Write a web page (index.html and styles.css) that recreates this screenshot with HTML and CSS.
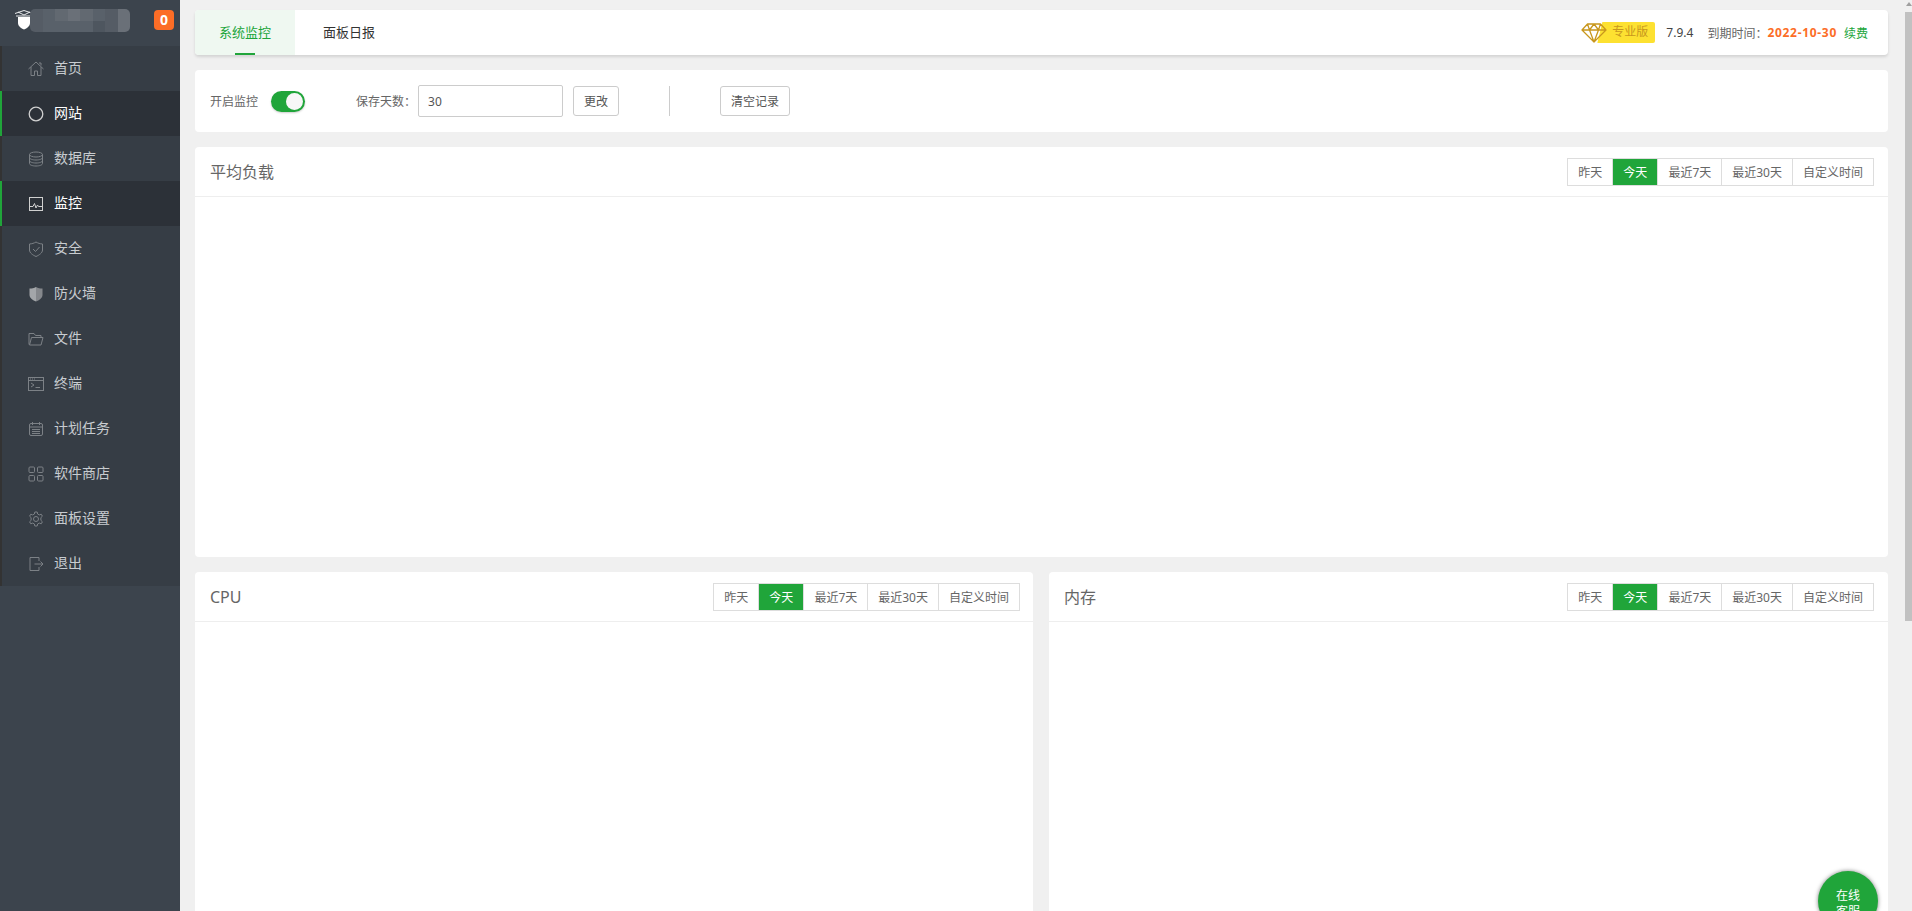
FILE: index.html
```html
<!DOCTYPE html>
<html lang="en">

<head>
    <meta charset="UTF-8">
    <title>系统监控</title>
    <link rel="stylesheet" href="styles.css">
</head>

<body>
    <div class="layout">
        <!-- Sidebar -->
        <aside class="sidebar">
            <div class="logo-bar">
                <svg class="logo-icon" viewBox="0 0 18 20" width="18" height="20">
                    <path d="M0 3.5 9 0.5 18 3.5 M3 2 9 5 15 2 M1 6 H17" fill="none" stroke="#e8eaec" stroke-width="1"/>
                    <path d="M3 7 H15 V13 C15 16 12 18.5 9 19.5 C6 18.5 3 16 3 13 Z" fill="#fff"/>
                </svg>
                <div class="mosaic">
                    <i class="m2"></i><i class="m3"></i><i class="m4"></i><i class="m5"></i><i class="m4"></i><i class="m3"></i><i class="m2"></i><i class="m5"></i>
                    <i class="m2"></i><i class="m3"></i><i class="m3"></i><i class="m3"></i><i class="m3"></i><i class="m1"></i><i class="m2"></i><i class="m5"></i>
                </div>
                <span class="badge">0</span>
            </div>
            <ul class="menu">
                <li class="menu-item">
                    <svg viewBox="0 0 16 16"><path d="M0.5 8 8 1 15.5 8 M3 6 V14.5 H6.5 V10 H9.5 V14.5 H13 V6 M11 2 H13 V4.5"/></svg>
                    <span>首页</span>
                </li>
                <li class="menu-item active">
                    <svg viewBox="0 0 16 16"><circle cx="8" cy="8" r="6.8" stroke-width="1.3"/></svg>
                    <span>网站</span>
                </li>
                <li class="menu-item">
                    <svg viewBox="0 0 16 16"><ellipse cx="8" cy="3.5" rx="6.5" ry="2.5"/><path d="M1.5 3.5 V12.5 C1.5 14 4.5 15 8 15 S14.5 14 14.5 12.5 V3.5 M1.5 6.5 C1.5 8 4.5 9 8 9 S14.5 8 14.5 6.5 M1.5 9.5 C1.5 11 4.5 12 8 12 S14.5 11 14.5 9.5"/></svg>
                    <span>数据库</span>
                </li>
                <li class="menu-item active">
                    <svg viewBox="0 0 16 16"><rect x="1.5" y="1.5" width="13" height="13"/><path d="M2 10.5 H5 L6.5 7.5 8 12 9.5 9 10.5 10.5 H14"/></svg>
                    <span>监控</span>
                </li>
                <li class="menu-item">
                    <svg viewBox="0 0 16 16"><path d="M8 1 C10 2.2 12 2.8 14.5 3 V9 C14.5 12 11 14.2 8 15.5 C5 14.2 1.5 12 1.5 9 V3 C4 2.8 6 2.2 8 1 Z M5 8 7.5 10.5 11.5 6"/></svg>
                    <span>安全</span>
                </li>
                <li class="menu-item">
                    <svg viewBox="0 0 16 16"><path class="fill-light" d="M8 1 C6 2.2 4 2.6 1.5 2.6 V9 C1.5 12 5 14.5 8 15.5 Z"/><path class="fill-dim" d="M8 1 C10 2.2 12 2.6 14.5 2.6 V9 C14.5 12 11 14.5 8 15.5 Z"/></svg>
                    <span>防火墙</span>
                </li>
                <li class="menu-item">
                    <svg viewBox="0 0 16 16"><path d="M1 13.5 V2.5 H6 L7.5 4.5 H13 V6.5 M1.5 14 H13 L15 6.5 H3.5 Z"/></svg>
                    <span>文件</span>
                </li>
                <li class="menu-item">
                    <svg viewBox="0 0 16 16"><rect x="0.5" y="1.5" width="15" height="13"/><path d="M0.5 4.5 H15.5 M2 3 H3 M4 3 H5 M6 3 H7 M3 7 6 9 3 11 M7.5 11.5 H12"/></svg>
                    <span>终端</span>
                </li>
                <li class="menu-item">
                    <svg viewBox="0 0 16 16"><rect x="1.5" y="2.5" width="13" height="12" rx="1.5"/><path d="M1.5 6 H14.5 M4.5 1 V4 M11.5 1 V4 M4 8.5 H12 M4 10.5 H12 M4 12.5 H12"/></svg>
                    <span>计划任务</span>
                </li>
                <li class="menu-item">
                    <svg viewBox="0 0 16 16"><rect x="1" y="1" width="5.5" height="5.5" rx="1"/><rect x="9.5" y="1" width="5.5" height="5.5" rx="1"/><rect x="1" y="9.5" width="5.5" height="5.5" rx="1"/><rect x="9.5" y="9.5" width="5.5" height="5.5" rx="1"/></svg>
                    <span>软件商店</span>
                </li>
                <li class="menu-item">
                    <svg viewBox="0 0 16 16"><circle cx="8" cy="8" r="2.5"/><path d="M6.8 1 H9.2 L9.6 3 11.3 3.9 13.2 3.2 14.4 5.2 12.9 6.6 V9.4 L14.4 10.8 13.2 12.8 11.3 12.1 9.6 13 9.2 15 H6.8 L6.4 13 4.7 12.1 2.8 12.8 1.6 10.8 3.1 9.4 V6.6 L1.6 5.2 2.8 3.2 4.7 3.9 6.4 3 Z"/></svg>
                    <span>面板设置</span>
                </li>
                <li class="menu-item">
                    <svg viewBox="0 0 16 16"><path d="M11 5 V1.5 H2 V14.5 H11 V11 M6.5 8 H15 M12.5 5.5 15 8 12.5 10.5"/></svg>
                    <span>退出</span>
                </li>
            </ul>
        </aside>

        <!-- Main content -->
        <main class="main">
            <div class="card top-bar">
                <div class="tabs">
                    <span class="tab on">系统监控</span>
                    <span class="tab">面板日报</span>
                </div>
                <div class="product">
                    <svg class="diamond" viewBox="0 0 26 20" width="26" height="20">
                        <path d="M6.5 1 H19.5 L25 7 13 19 1 7 Z M1 7 H25 M8.5 7 13 19 17.5 7 M6.5 1 8.5 7 13 1 17.5 7 19.5 1" fill="none" stroke="#c8971d" stroke-width="1.3" stroke-linejoin="round"/>
                    </svg>
                    <span class="pro-tag">专业版</span>
                    <span class="version">7.9.4</span>
                    <span class="expire-label">到期时间：</span>
                    <span class="expire-date">2022-10-30</span>
                    <span class="renew">续费</span>
                </div>
            </div>

            <div class="card control-bar">
                <span class="ctl-label">开启监控</span>
                <span class="switch"></span>
                <span class="ctl-label days-label">保存天数：</span>
                <input class="days-input" type="text" value="30">
                <button class="btn-plain change-btn">更改</button>
                <span class="divider"></span>
                <button class="btn-plain clear-btn">清空记录</button>
            </div>

            <section class="card chart-card chart-load">
                <div class="chart-head">
                    <h3>平均负载</h3>
                    <div class="range">
                        <span>昨天</span><span class="on">今天</span><span>最近7天</span><span>最近30天</span><span>自定义时间</span>
                    </div>
                </div>
            </section>

            <div class="chart-row">
                <section class="card chart-card">
                    <div class="chart-head">
                        <h3>CPU</h3>
                        <div class="range">
                            <span>昨天</span><span class="on">今天</span><span>最近7天</span><span>最近30天</span><span>自定义时间</span>
                        </div>
                    </div>
                </section>
                <section class="card chart-card">
                    <div class="chart-head">
                        <h3>内存</h3>
                        <div class="range">
                            <span>昨天</span><span class="on">今天</span><span>最近7天</span><span>最近30天</span><span>自定义时间</span>
                        </div>
                    </div>
                </section>
            </div>
        </main>

        <!-- Page scrollbar -->
        <div class="scrollbar">
            <div class="scroll-arrow"></div>
            <div class="scroll-thumb"></div>
        </div>
    </div>

    <div class="service">在线<br>客服</div>
</body>

</html>
```

FILE: styles.css
```css
* {
    box-sizing: border-box;
}

html,
body {
    height: 911px;
    margin: 0;
    overflow: hidden;
}

body {
    background-color: #f0f0f0;
    color: #555;
    font-family: "Noto Sans", "Noto Sans CJK SC", sans-serif;
    font-size: 12px;
}

.layout {
    display: flex;
    height: 911px;
}

/* Sidebar */
.sidebar {
    flex: 0 0 180px;
    background-color: #3c444d;
}

.logo-bar {
    display: flex;
    align-items: center;
    height: 46px;
    padding-left: 15px;
}

.logo-icon {
    flex: none;
    margin-top: -6px;
}

.mosaic {
    display: grid;
    grid-template-columns: repeat(8, 12.5px);
    grid-auto-rows: 11.5px;
    margin-left: -3px;
    margin-top: -5px;
    border-radius: 5px;
    overflow: hidden;
}

.m1 { background-color: #4e565f; }
.m2 { background-color: #555c65; }
.m3 { background-color: #59616a; }
.m4 { background-color: #626971; }
.m5 { background-color: #6a7078; }

.badge {
    width: 20px;
    height: 20px;
    margin-left: 24px;
    margin-top: -6px;
    border-radius: 4px;
    background-color: #fc6d26;
    color: #fff;
    font-size: 14px;
    font-weight: bold;
    line-height: 20px;
    text-align: center;
}

.menu {
    list-style: none;
    margin: 0;
    padding: 0;
}

.menu-item {
    display: flex;
    align-items: center;
    gap: 10px;
    height: 45px;
    padding-left: 26px;
    border-left: 2px solid #333;
    background-color: #363d45;
    color: #c8ccd0;
    font-size: 14px;
}

.menu-item span {
    margin-top: -4px;
}

.menu-item svg {
    flex: none;
    width: 16px;
    height: 16px;
    fill: none;
    stroke: #7c8186;
    stroke-width: 1;
}

.menu-item .fill-light {
    fill: #a3a6a9;
    stroke: none;
}

.menu-item .fill-dim {
    fill: #85888c;
    stroke: none;
}

.menu-item.active {
    border-left-color: #20a53a;
    background-color: #2c3138;
    color: #fff;
}

.menu-item.active svg {
    stroke: #d0d0d0;
}

/* Main */
.main {
    flex: 1;
    min-width: 0;
    padding: 10px 17px 0 15px;
}

.card {
    margin-bottom: 15px;
    border-radius: 4px;
    background-color: #fff;
}

.top-bar {
    display: flex;
    justify-content: space-between;
    height: 45px;
    box-shadow: 0 2px 3px rgba(0, 0, 0, 0.12);
}

.tabs {
    display: flex;
}

.tab {
    position: relative;
    width: 100px;
    margin-right: 4px;
    color: #333;
    font-size: 13px;
    line-height: 45px;
    text-align: center;
}

.tab.on {
    border-radius: 4px 0 0 4px;
    background-color: #eff8f1;
    color: #20a53a;
}

.tab.on::after {
    content: "";
    position: absolute;
    left: 40px;
    bottom: 0;
    width: 20px;
    height: 2px;
    background-color: #20a53a;
}

.product {
    display: flex;
    align-items: center;
    padding-right: 20px;
}

.diamond {
    position: relative;
    z-index: 1;
    flex: none;
}

.pro-tag {
    width: 58px;
    height: 21px;
    margin-left: -10px;
    padding-left: 15px;
    border-radius: 0 2px 2px 0;
    background-color: #fde131;
    color: #c8971d;
    font-size: 12px;
    line-height: 20px;
    clip-path: polygon(5px 0, 100% 0, 100% 100%, 0 100%);
}

.version {
    margin-left: 11px;
    color: #444;
    font-size: 12px;
}

.expire-label {
    margin-left: 14px;
    color: #666;
}

.expire-date {
    color: #fc6d26;
    font-weight: bold;
    letter-spacing: 0.7px;
}

.renew {
    margin-left: 7px;
    color: #20a53a;
}

.control-bar {
    display: flex;
    align-items: center;
    height: 62px;
    padding-left: 15px;
}

.ctl-label {
    color: #666;
}

.switch {
    position: relative;
    width: 34px;
    height: 21px;
    margin-left: 13px;
    border-radius: 11px;
    background-color: #20a53a;
    box-shadow: 0 1px 2px rgba(0, 0, 0, 0.2);
}

.switch::after {
    content: "";
    position: absolute;
    top: 2px;
    right: 2px;
    width: 17px;
    height: 17px;
    border-radius: 50%;
    background-color: #f7f7f7;
}

.days-label {
    margin-left: 51px;
}

.days-input {
    width: 145px;
    height: 32px;
    margin-left: 2px;
    padding: 0 9px;
    border: 1px solid #ccc;
    border-radius: 2px;
    color: #555;
    font-family: inherit;
    font-size: 12px;
}

.btn-plain {
    height: 30px;
    border: 1px solid #ccc;
    border-radius: 3px;
    background-color: #fff;
    color: #555;
    font-family: inherit;
    font-size: 12px;
}

.change-btn {
    width: 46px;
    margin-left: 10px;
}

.divider {
    width: 1px;
    height: 30px;
    margin-left: 50px;
    background-color: #ccc;
}

.clear-btn {
    width: 70px;
    margin-left: 50px;
}

.chart-card {
    overflow: hidden;
}

.chart-load {
    height: 410px;
}

.chart-row {
    display: flex;
    gap: 16px;
}

.chart-row .chart-card {
    flex: 1;
    height: 400px;
}

.chart-row .chart-card:first-child {
    flex: 0 0 838px;
}

.chart-row .chart-card:first-child .chart-head {
    padding-right: 13px;
}

.chart-head {
    display: flex;
    justify-content: space-between;
    align-items: center;
    height: 50px;
    padding: 0 14px 0 15px;
    border-bottom: 1px solid #eee;
}

.chart-head h3 {
    margin: 0;
    color: #666;
    font-size: 16px;
    font-weight: normal;
    line-height: 24px;
}

.range {
    display: flex;
    border: 1px solid #ddd;
}

.range span {
    height: 26px;
    padding: 0 10px;
    border-left: 1px solid #ddd;
    color: #666;
    line-height: 27px;
}

.range span:first-child {
    border-left: none;
}

.range span.on {
    background-color: #20a53a;
    color: #fff;
}

/* Page scrollbar */
.scrollbar {
    flex: 0 0 7px;
    background-color: #f0f0f0;
}

.scroll-arrow {
    width: 6px;
    height: 0;
    margin: 2px auto 6px;
    border-left: 3px solid transparent;
    border-right: 3px solid transparent;
    border-bottom: 4px solid #a0a0a0;
}

.scroll-thumb {
    height: 609px;
    background-color: #c1c1c1;
}

/* Floating service button */
.service {
    position: absolute;
    top: 871px;
    left: 1818px;
    width: 60px;
    height: 60px;
    padding-top: 17px;
    border-radius: 50%;
    background-color: #20a53a;
    box-shadow: 0 0 4px rgba(0, 0, 0, 0.5);
    color: #fff;
    font-size: 12px;
    line-height: 16px;
    text-align: center;
}
```
